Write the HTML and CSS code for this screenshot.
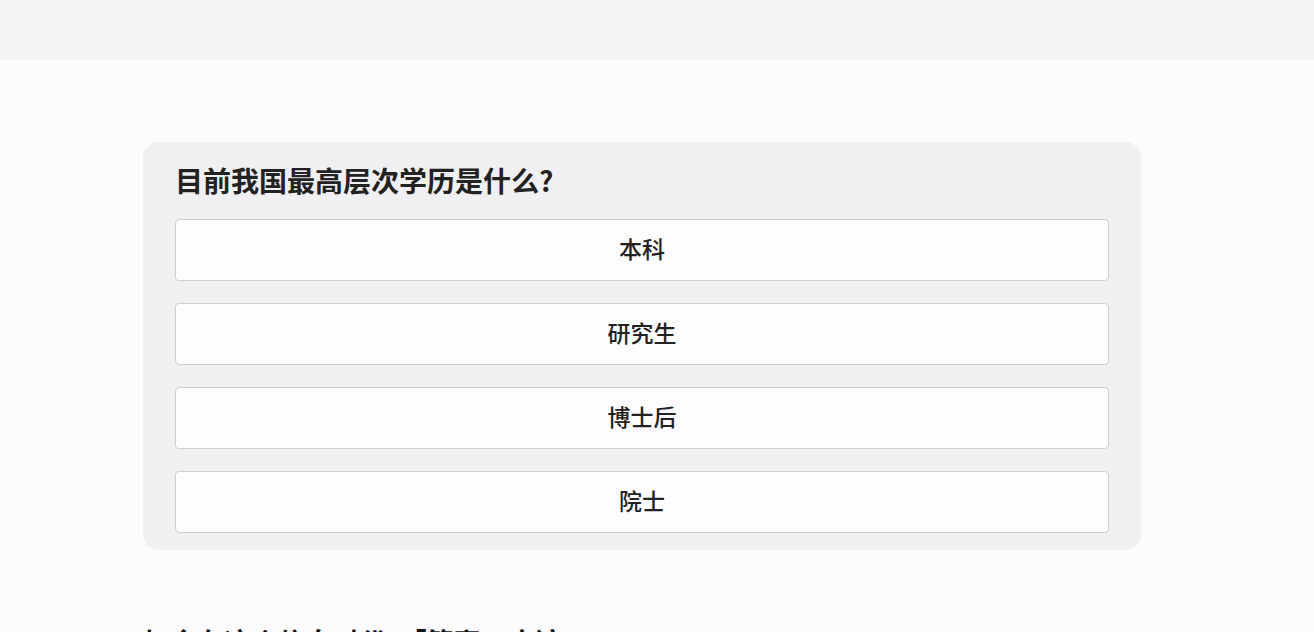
FILE: index.html
```html
<!DOCTYPE html>
<html lang="zh">
<head>
<meta charset="utf-8">
<link rel="stylesheet" href="styles.css">
</head>
<body>
<div class="topbar"></div>
<main class="content">
  <section class="quiz">
    <h2 class="question">目前我国最高层次学历是什么?</h2>
    <div class="options">
      <button class="option">本科</button>
      <button class="option">研究生</button>
      <button class="option">博士后</button>
      <button class="option">院士</button>
    </div>
  </section>
  <p class="next">如今在这个信息时代，「答案」应该</p>
</main>
</body>
</html>
```
FILE: styles.css
```css
html, body {
  margin: 0;
  padding: 0;
}
body {
  background: #fcfbfd;
  font-family: "Noto Sans CJK SC", "Noto Sans", sans-serif;
  color: #222;
  height: 632px;
  overflow: hidden;
}
.topbar {
  height: 60px;
  background: #f4f3f6;
}
.content {
  padding: 82px 0 0 143px;
}
.quiz {
  width: 998px;
  box-sizing: border-box;
  background: #f0eff1;
  border-radius: 16px;
  padding: 18px 32px 17px 32px;
}
.question {
  margin: 0 0 19px 0;
  font-size: 28px;
  font-weight: 700;
  line-height: 40px;
  color: #222;
}
.options {
  display: flex;
  flex-direction: column;
  gap: 22px;
}
.option {
  display: block;
  width: 100%;
  height: 62px;
  background: #fdfcfe;
  border: 1px solid #cfced2;
  border-radius: 4px;
  font-family: "Noto Sans CJK SC", "Noto Sans", sans-serif;
  font-size: 23px;
  font-weight: 500;
  color: #222;
  padding: 0 0 5px 0;
}
.next {
  margin: 72px 0 0 0;
  font-size: 27px;
  font-weight: 700;
  line-height: 40px;
  color: #111;
}
```
